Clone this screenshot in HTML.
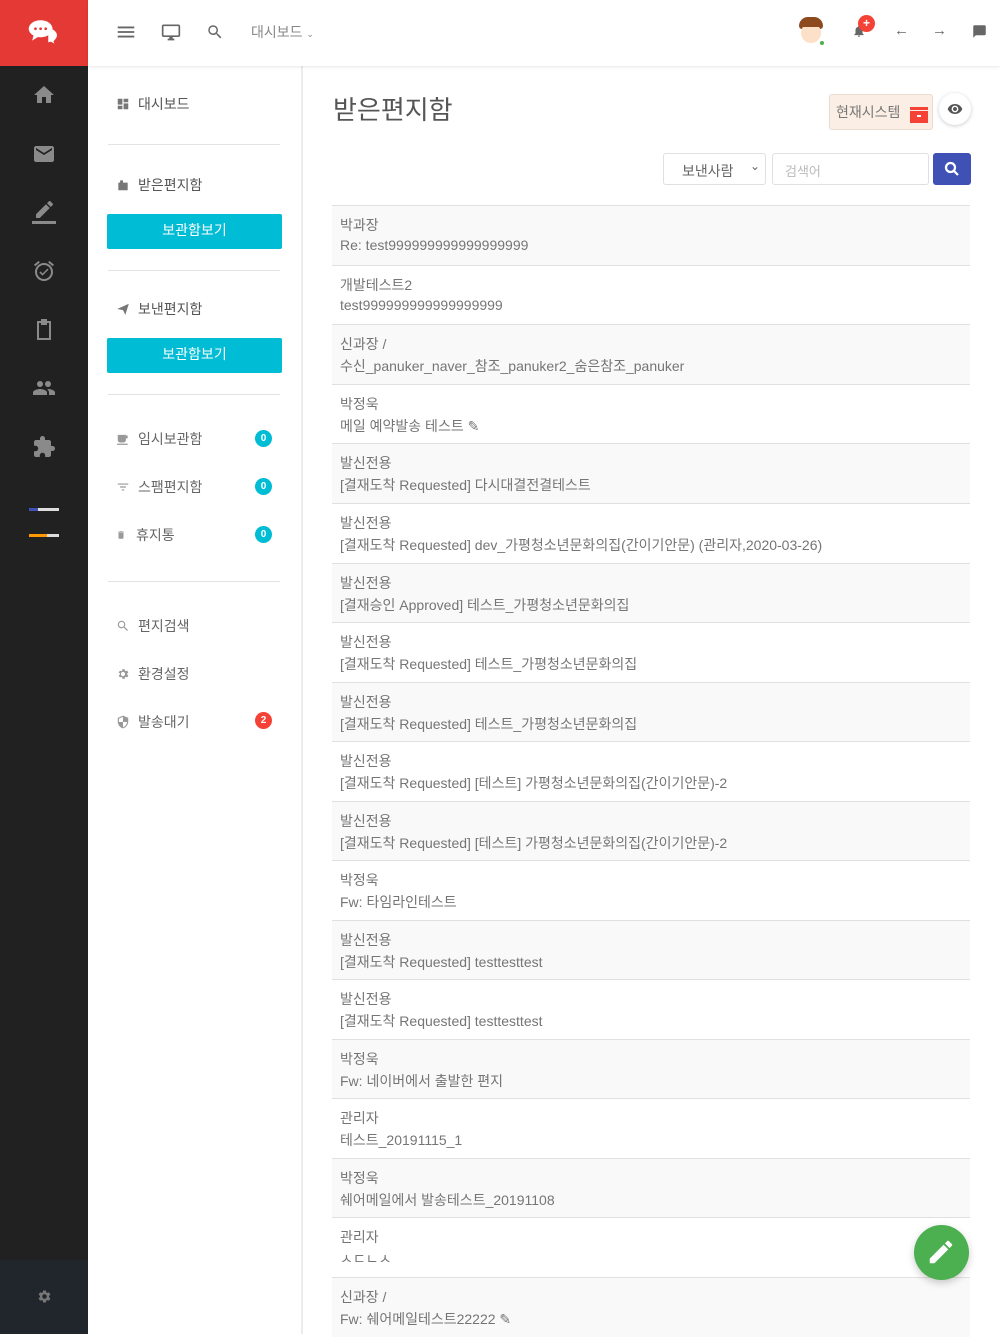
<!DOCTYPE html>
<html><head><meta charset="utf-8">
<style>
*{box-sizing:border-box;margin:0;padding:0}
body{width:1000px;height:1334px;overflow:hidden;background:#fff;font-family:"Liberation Sans","Noto Sans CJK KR",sans-serif;color:#757575;position:relative}
.side{position:absolute;left:0;top:0;width:88px;height:1334px;background:#212121}
.logo{position:absolute;left:0;top:0;width:88px;height:66px;background:#e53935}
.side svg.i{position:absolute;left:32px;width:24px;height:24px;fill:#8a8a8a}
.bot{position:absolute;left:0;top:1260px;width:88px;height:74px;background:#20262c}
.hdr{position:absolute;left:88px;top:0;width:912px;height:66px;background:#fff;box-shadow:0 1px 3px rgba(0,0,0,.1);z-index:2}
.sub{position:absolute;left:88px;top:66px;width:215px;height:1268px;border-right:2px solid #ececec;background:#fff}
.sub .item{position:absolute;left:28px;font-size:14px;color:#666;display:flex;align-items:center}
.sub .item svg{width:14px;height:14px;fill:#777;margin-right:8px}
.btn{position:absolute;left:19px;width:175px;height:35px;background:#00bcd4;color:#fff;font-size:14px;text-align:center;line-height:33px;border-radius:2px}
.hr{position:absolute;left:20px;width:172px;height:1px;background:#e3e3e3}
.badge{position:absolute;left:167px;width:17px;height:17px;border-radius:50%;background:#00bcd4;color:#fff;font-size:10px;font-weight:bold;text-align:center;line-height:17px}
.gi{color:#888}
.row{position:absolute;left:332px;width:638px;height:60px;border-top:1px solid #e0e0e0;padding-left:8px;font-size:14px;color:#757575}
.row .a{position:absolute;top:9px;left:8px}
.row .b{position:absolute;top:31px;left:8px}
.row.g{background:#f9f9f9}
</style></head><body>
<div class="side">
 <div class="logo"><svg viewBox="0 0 40 40" width="34" height="34" style="position:absolute;left:27px;top:16px"><path d="M25 14c6 0 11 4 11 9 0 3-2 5-4 7l2 4-6-3c-1 0-2 .5-3 .5" fill="#fff" stroke="#e53935" stroke-width="1.5"/><ellipse cx="16" cy="15" rx="14" ry="10" fill="#fff"/><path d="M8 22l-2 7 8-5z" fill="#fff"/><circle cx="10" cy="15" r="1.6" fill="#e53935"/><circle cx="16" cy="15" r="1.6" fill="#e53935"/><circle cx="22" cy="15" r="1.6" fill="#e53935"/></svg></div>
 <svg class="i" style="top:83px" viewBox="0 0 24 24"><path d="M10 20v-6h4v6h5v-8h3L12 3 2 12h3v8z"/></svg>
 <svg class="i" style="top:142px" viewBox="0 0 24 24"><path d="M20 4H4c-1.1 0-2 .9-2 2v12c0 1.1.9 2 2 2h16c1.1 0 2-.9 2-2V6c0-1.1-.9-2-2-2zm0 4l-8 5-8-5V6l8 5 8-5v2z"/></svg>
 <svg class="i" style="top:201px" viewBox="0 0 24 24"><path d="M17.75 7L14 3.25l-10 10V17h3.75l10-10zm2.96-2.96a.996.996 0 000-1.41L18.37.29a.996.996 0 00-1.41 0L15 2.25 18.75 6l1.96-1.96z"/><rect x="0" y="20" width="24" height="3"/></svg>
 <svg class="i" style="top:259px" viewBox="0 0 24 24"><path d="M22 5.72l-4.6-3.86-1.29 1.53 4.6 3.86L22 5.72zM7.88 3.39L6.6 1.86 2 5.71l1.29 1.53 4.59-3.85zM12 4c-4.97 0-9 4.03-9 9s4.02 9 9 9c4.97 0 9-4.03 9-9s-4.03-9-9-9zm0 16c-3.87 0-7-3.13-7-7s3.130-7 7-7 7 3.13 7 7-3.13 7-7 7zm-1.46-5.47L8.41 12.4l-1.06 1.06 3.18 3.18 6-6-1.06-1.06-4.93 4.95z"/></svg>
 <svg class="i" style="top:317px" viewBox="0 0 24 24"><path d="M5 4h4V2h6v2h4v19H5zM7 6v15h10V6h-2v2H9V6z"/></svg>
 <svg class="i" style="top:376px" viewBox="0 0 24 24"><path d="M16 11c1.66 0 2.99-1.34 2.99-3S17.66 5 16 5c-1.66 0-3 1.34-3 3s1.34 3 3 3zm-8 0c1.66 0 2.99-1.34 2.99-3S9.66 5 8 5C6.34 5 5 6.34 5 8s1.34 3 3 3zm0 2c-2.33 0-7 1.17-7 3.5V19h14v-2.5c0-2.33-4.67-3.5-7-3.5zm8 0c-.29 0-.62.02-.97.05 1.16.84 1.97 1.97 1.97 3.45V19h6v-2.5c0-2.33-4.67-3.5-7-3.5z"/></svg>
 <svg class="i" style="top:435px" viewBox="0 0 24 24"><path d="M20.5 11H19V7c0-1.1-.9-2-2-2h-4V3.5C13 2.12 11.88 1 10.5 1S8 2.12 8 3.5V5H4c-1.1 0-1.99.9-1.99 2v3.8H3.5c1.49 0 2.7 1.21 2.7 2.7s-1.21 2.7-2.7 2.7H2V20c0 1.1.9 2 2 2h3.8v-1.5c0-1.49 1.21-2.7 2.7-2.7 1.490 0 2.7 1.21 2.7 2.7V22H17c1.1 0 2-.9 2-2v-4h1.5c1.38 0 2.5-1.12 2.5-2.5S21.88 11 20.5 11z"/></svg>
 <div style="position:absolute;left:29px;top:508px;width:30px;height:3px;background:#ddd"><div style="width:9px;height:3px;background:#3f51b5"></div></div>
 <div style="position:absolute;left:29px;top:534px;width:30px;height:3px;background:#ddd"><div style="width:18px;height:3px;background:#ff9800"></div></div>
 <div class="bot"><svg viewBox="0 0 24 24" width="15" height="15" style="position:absolute;left:37px;top:29px;fill:#777"><path d="M19.14 12.94c.04-.3.06-.61.06-.94 0-.32-.02-.64-.07-.94l2.030-1.58a.49.49 0 00.12-.61l-1.92-3.32a.488.488 0 00-.59-.22l-2.39.96c-.5-.38-1.03-.7-1.62-.94l-.36-2.54a.484.484 0 00-.48-.41h-3.84c-.24 0-.43.17-.47.41l-.36 2.54c-.59.24-1.13.57-1.62.94l-2.39-.96c-.22-.08-.47 0-.59.22L2.74 8.87c-.12.21-.08.47.12.61l2.03 1.58c-.05.3-.09.63-.09.94s.02.64.07.94l-2.03 1.58a.49.49 0 00-.12.61l1.92 3.32c.12.22.37.29.59.22l2.39-.96c.5.38 1.03.7 1.62.94l.36 2.54c.05.24.24.41.48.41h3.84c.24 0 .44-.17.47-.41l.36-2.54c.59-.24 1.13-.56 1.62-.94l2.39.96c.22.08.47 0 .59-.22l1.92-3.32c.12-.22.07-.47-.12-.61l-2.01-1.58zM12 15.6c-1.98 0-3.6-1.62-3.6-3.6s1.62-3.6 3.6-3.6 3.6 1.62 3.6 3.6-1.62 3.6-3.6 3.6z"/></svg></div>
</div>

<div class="hdr">
 <svg viewBox="0 0 24 24" width="22" height="22" style="position:absolute;left:27px;top:21px;fill:#666"><path d="M3 6h18v2H3zm0 5h18v2H3zm0 5h18v2H3z"/></svg>
 <svg viewBox="0 0 24 24" width="20" height="20" style="position:absolute;left:73px;top:22px;fill:#666"><path d="M21 3H3c-1.1 0-2 .9-2 2v11c0 1.1.9 2 2 2h7v2H8v2h8v-2h-2v-2h7c1.1 0 2-.9 2-2V5c0-1.1-.9-2-2-2zm0 13H3V5h18v11z"/></svg>
 <svg viewBox="0 0 24 24" width="18" height="18" style="position:absolute;left:118px;top:23px;fill:#666"><path d="M15.5 14h-.79l-.28-.27A6.47 6.47 0 0016 9.5 6.5 6.5 0 109.5 16c1.61 0 3.09-.59 4.23-1.57l.27.28v.79l5 4.99L20.49 19l-4.99-5zm-6 0C7.01 14 5 11.99 5 9.5S7.01 5 9.5 5 14 7.01 14 9.5 11.99 14 9.5 14z"/></svg>
 <div style="position:absolute;left:163px;top:22px;font-size:14px;color:#888">대시보드 <span style="font-size:9px">⌄</span></div>
 <div style="position:absolute;left:710px;top:17px;width:26px;height:28px">
  <div style="position:absolute;left:1px;top:0;width:24px;height:12px;background:#8d4a1f;border-radius:12px 12px 4px 4px"></div>
  <div style="position:absolute;left:3px;top:6px;width:20px;height:20px;background:#fde0c8;border-radius:50%"></div>
  <div style="position:absolute;left:3px;top:3px;width:20px;height:7px;background:#8d4a1f;border-radius:8px 8px 2px 2px"></div>
  <div style="position:absolute;left:22px;top:24px;width:4px;height:4px;background:#4caf50;border-radius:50%"></div>
 </div>
 <svg viewBox="0 0 24 24" width="14" height="14" style="position:absolute;left:764px;top:24px;fill:#666"><path d="M12 22c1.1 0 2-.9 2-2h-4c0 1.1.9 2 2 2zm6-6v-5c0-3.07-1.64-5.64-4.5-6.32V4c0-.83-.67-1.5-1.5-1.5s-1.5.67-1.5 1.5v.68C7.63 5.36 6 7.92 6 11v5l-2 2v1h16v-1l-2-2z"/></svg>
 <div style="position:absolute;left:770px;top:15px;width:17px;height:17px;border-radius:50%;background:#f44336;color:#fff;font-size:12px;font-weight:bold;text-align:center;line-height:16px">+</div>
 <div style="position:absolute;left:806px;top:22px;font-size:15px;color:#666">←</div>
 <div style="position:absolute;left:844px;top:22px;font-size:15px;color:#666">→</div>
 <svg viewBox="0 0 24 24" width="15" height="15" style="position:absolute;left:884px;top:24px;fill:#666"><path d="M20 2H4c-1.1 0-2 .9-2 2v18l4-4h14c1.1 0 2-.9 2-2V4c0-1.1-.9-2-2-2z"/></svg>
</div>

<div class="sub">
 <div class="item" style="top:28px;color:#555"><svg viewBox="0 0 24 24"><path d="M3 13h8V3H3v10zm0 8h8v-6H3v6zm10 0h8V11h-8v10zm0-18v6h8V3h-8z"/></svg>대시보드</div>
 <div class="hr" style="top:78px"></div>
 <div class="item" style="top:109px;color:#555"><svg viewBox="0 0 24 24"><path d="M4 8h3V4h5v4h8v13H4z"/></svg>받은편지함</div>
 <div class="btn" style="top:148px">보관함보기</div>
 <div class="hr" style="top:204px"></div>
 <div class="item" style="top:233px;color:#555"><svg viewBox="0 0 24 24"><path d="M2 12l20-9-6 19-4-8z"/></svg>보낸편지함</div>
 <div class="btn" style="top:272px">보관함보기</div>
 <div class="hr" style="top:328px"></div>
 <div class="item gi" style="top:363px"><svg viewBox="0 0 24 24" style="fill:#999"><path d="M3 5h14v9c0 2-2 4-4 4H7c-2 0-4-2-4-4zm14 1h3v5h-3zM2 20h18v2H2z"/></svg>임시보관함</div>
 <div class="badge" style="top:364px">0</div>
 <div class="item gi" style="top:411px"><svg viewBox="0 0 24 24" style="fill:#999"><path d="M3 6h18v2H3zm4 5h10v2H7zm3 5h4v2h-4z"/></svg>스팸편지함</div>
 <div class="badge" style="top:412px">0</div>
 <div class="item gi" style="top:459px"><svg viewBox="0 0 24 24" style="fill:#999;width:10px;margin-right:10px"><path d="M6 19c0 1.1.9 2 2 2h8c1.1 0 2-.9 2-2V7H6v12zM19 4h-3.5l-1-1h-5l-1 1H5v2h14V4z"/></svg>휴지통</div>
 <div class="badge" style="top:460px">0</div>
 <div class="hr" style="top:515px"></div>
 <div class="item gi" style="top:550px"><svg viewBox="0 0 24 24" style="fill:#999"><path d="M15.5 14h-.79l-.28-.27A6.47 6.47 0 0016 9.5 6.5 6.5 0 109.5 16c1.61 0 3.09-.59 4.23-1.57l.27.28v.79l5 4.99L20.49 19l-4.99-5zm-6 0C7.01 14 5 11.99 5 9.5S7.01 5 9.5 5 14 7.01 14 9.5 11.99 14 9.5 14z"/></svg>편지검색</div>
 <div class="item gi" style="top:598px"><svg viewBox="0 0 24 24" style="fill:#999"><path d="M19.14 12.94c.04-.3.06-.61.06-.94 0-.32-.02-.64-.07-.94l2.03-1.58-1.92-3.32-2.39.96c-.5-.38-1.03-.7-1.62-.94L14.87 3.6h-3.84l-.36 2.54c-.59.24-1.13.57-1.62.94l-2.39-.96-1.92 3.32 2.03 1.58c-.05.3-.09.63-.09.94s.02.64.07.94l-2.03 1.58 1.92 3.32 2.39-.96c.5.38 1.03.7 1.62.94l.36 2.54h3.84l.36-2.54c.59-.24 1.13-.56 1.62-.94l2.39.96 1.92-3.32-2.01-1.58zM12 15.6a3.6 3.6 0 110-7.2 3.6 3.6 0 010 7.2z"/></svg>환경설정</div>
 <div class="item gi" style="top:646px"><svg viewBox="0 0 24 24" style="fill:#999"><path d="M12 1L3 5v6c0 5.55 3.84 10.74 9 12 5.16-1.26 9-6.45 9-12V5l-9-4zm0 11h7c-.53 4.12-3.28 7.79-7 8.94V12H5V6.3l7-3.11V12z"/></svg>발송대기</div>
 <div class="badge" style="top:646px;background:#f44336">2</div>
</div>

<div style="position:absolute;left:333px;top:90px;font-size:26px;color:#555">받은편지함</div>
<div style="position:absolute;left:829px;top:94px;width:104px;height:36px;background:#fbeee4;border:1px solid #eadbd0;border-radius:3px;font-size:14px;color:#777;padding:7px 0 0 6px">현재시스템
 <div style="position:absolute;left:80px;top:12px;width:18px;height:16px;background:#f44336"><div style="position:absolute;left:0;top:3px;width:18px;height:1px;background:#fbeee4"></div><div style="position:absolute;left:7px;top:8px;width:4px;height:1.5px;background:#fff"></div></div>
</div>
<div style="position:absolute;left:939px;top:93px;width:32px;height:32px;border-radius:50%;background:#fff;box-shadow:0 1px 4px rgba(0,0,0,.2)"><svg viewBox="0 0 24 24" width="16" height="16" style="position:absolute;left:8px;top:8px;fill:#555"><path d="M12 4.5C7 4.5 2.73 7.61 1 12c1.73 4.39 6 7.5 11 7.5s9.27-3.11 11-7.5c-1.73-4.39-6-7.5-11-7.5zM12 17c-2.76 0-5-2.24-5-5s2.24-5 5-5 5 2.24 5 5-2.24 5-5 5zm0-8c-1.66 0-3 1.34-3 3s1.34 3 3 3 3-1.34 3-3-1.34-3-3-3z"/></svg></div>

<div style="position:absolute;left:663px;top:153px;width:103px;height:32px;border:1px solid #e0e0e0;border-radius:3px;font-size:14px;color:#666;padding:7px 0 0 18px">보낸사람<span style="position:absolute;right:5px;top:5px;font-size:12px">⌄</span></div>
<div style="position:absolute;left:772px;top:153px;width:157px;height:32px;border:1px solid #e0e0e0;border-radius:3px;font-size:13px;color:#bbb;padding:7px 0 0 12px">검색어</div>
<div style="position:absolute;left:933px;top:153px;width:38px;height:32px;background:#3f51b5;border-radius:3px"><svg viewBox="0 0 24 24" width="18" height="18" style="position:absolute;left:10px;top:7px;fill:none;stroke:#fff;stroke-width:3"><circle cx="10" cy="10" r="6"/><path d="M14.5 14.5L20 20"/></svg></div>

<div class="row g" style="top:205px"><div class="a">박과장</div><div class="b">Re: test999999999999999999</div></div>
<div class="row" style="top:265px"><div class="a">개발테스트2</div><div class="b">test999999999999999999</div></div>
<div class="row g" style="top:324px"><div class="a">신과장 /</div><div class="b">수신_panuker_naver_참조_panuker2_숨은참조_panuker</div></div>
<div class="row" style="top:384px"><div class="a">박정욱</div><div class="b">메일 예약발송 테스트 ✎</div></div>
<div class="row g" style="top:443px"><div class="a">발신전용</div><div class="b">[결재도착 Requested] 다시대결전결테스트</div></div>
<div class="row" style="top:503px"><div class="a">발신전용</div><div class="b">[결재도착 Requested] dev_가평청소년문화의집(간이기안문) (관리자,2020-03-26)</div></div>
<div class="row g" style="top:563px"><div class="a">발신전용</div><div class="b">[결재승인 Approved] 테스트_가평청소년문화의집</div></div>
<div class="row" style="top:622px"><div class="a">발신전용</div><div class="b">[결재도착 Requested] 테스트_가평청소년문화의집</div></div>
<div class="row g" style="top:682px"><div class="a">발신전용</div><div class="b">[결재도착 Requested] 테스트_가평청소년문화의집</div></div>
<div class="row" style="top:741px"><div class="a">발신전용</div><div class="b">[결재도착 Requested] [테스트] 가평청소년문화의집(간이기안문)-2</div></div>
<div class="row g" style="top:801px"><div class="a">발신전용</div><div class="b">[결재도착 Requested] [테스트] 가평청소년문화의집(간이기안문)-2</div></div>
<div class="row" style="top:860px"><div class="a">박정욱</div><div class="b">Fw: 타임라인테스트</div></div>
<div class="row g" style="top:920px"><div class="a">발신전용</div><div class="b">[결재도착 Requested] testtesttest</div></div>
<div class="row" style="top:979px"><div class="a">발신전용</div><div class="b">[결재도착 Requested] testtesttest</div></div>
<div class="row g" style="top:1039px"><div class="a">박정욱</div><div class="b">Fw: 네이버에서 출발한 편지</div></div>
<div class="row" style="top:1098px"><div class="a">관리자</div><div class="b">테스트_20191115_1</div></div>
<div class="row g" style="top:1158px"><div class="a">박정욱</div><div class="b">쉐어메일에서 발송테스트_20191108</div></div>
<div class="row" style="top:1217px"><div class="a">관리자</div><div class="b">ㅅㄷㄴㅅ</div></div>
<div class="row g" style="top:1277px"><div class="a">신과장 /</div><div class="b">Fw: 쉐어메일테스트22222 ✎</div></div>

<div style="position:absolute;left:914px;top:1225px;width:55px;height:55px;border-radius:50%;background:#4caf50;box-shadow:0 3px 8px rgba(0,0,0,.2)"><svg viewBox="0 0 24 24" width="30" height="30" style="position:absolute;left:12px;top:12px;fill:#fff"><path d="M3 17.25V21h3.75L17.81 9.94l-3.75-3.75L3 17.25zM20.71 7.04a.996.996 0 000-1.41l-2.34-2.34a.996.996 0 00-1.41 0l-1.83 1.83 3.75 3.75 1.83-1.83z"/></svg></div>
</body></html>
